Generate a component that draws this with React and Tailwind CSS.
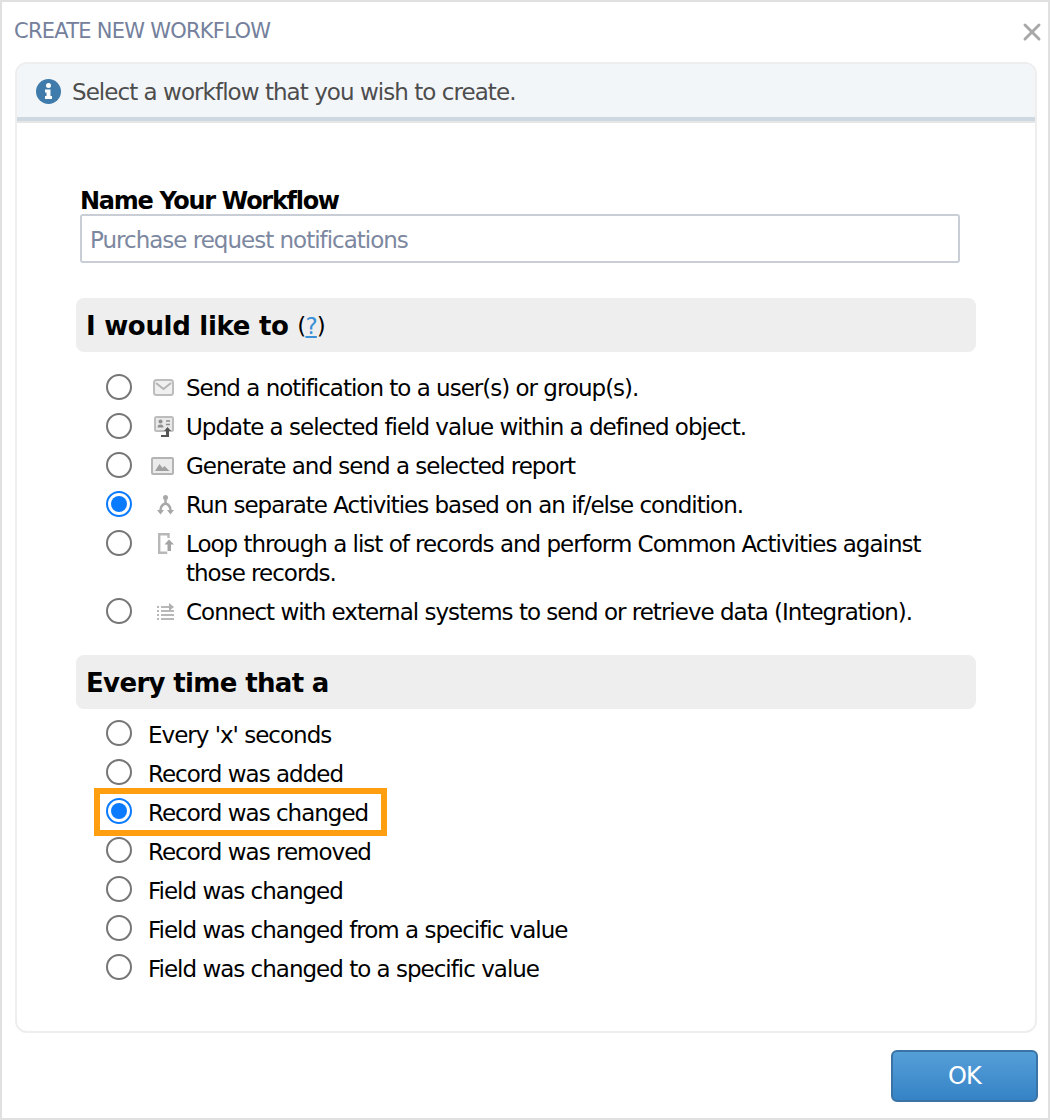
import { X } from 'lucide-react';

const font = { fontFamily: '"DejaVu Sans", sans-serif' };

const Radio = ({ checked = false }) => (
  <span className={`w-[26px] h-[26px] shrink-0 rounded-full flex items-center justify-center bg-white border-2 ${checked ? 'border-[#0a7aff]' : 'border-[#767676]'}`}>
    {checked && <span className="w-4 h-4 rounded-full bg-[#0a7aff]" />}
  </span>
);

const MailIcon = () => (
  <svg width="21" height="17" viewBox="0 0 21 17" fill="none">
    <rect x="1" y="1" width="19" height="15" rx="2.500" fill="#f0f0f0" stroke="#bdbdbd" strokeWidth="2" />
    <path d="M3 4l7.500 6L18 4" stroke="#b4b4b4" strokeWidth="2" />
  </svg>
);

const UpdateIcon = () => (
  <svg width="20" height="21" viewBox="0 0 20 21" fill="none">
    <rect x="0" y="0" width="20" height="16" rx="2.500" fill="#bdbdbd" />
    <rect x="2" y="2" width="16" height="12" fill="#e8e8e8" />
    <circle cx="6.500" cy="5.500" r="2" fill="#8f8f8f" />
    <path d="M3.500 11.500c0-2 1-3 3-3s3 1 3 3z" fill="#8f8f8f" />
    <path d="M12 5h4M12 8.500h4" stroke="#8f8f8f" strokeWidth="1.600" />
    <path d="M7 19h5v-4h-2l3.500-4 3.500 4h-2v6H7z" fill="#555" />
  </svg>
);

const ReportIcon = () => (
  <svg width="23" height="18" viewBox="0 0 23 18" fill="none">
    <rect x="1" y="1" width="21" height="16" rx="1" fill="#ebebeb" stroke="#b4b4b4" strokeWidth="2" />
    <path d="M4 14l4.500-7 3 4 2-2 5 5z" fill="#a0a0a0" />
  </svg>
);

const BranchIcon = () => (
  <svg width="17" height="20" viewBox="0 0 17 20" fill="none">
    <circle cx="8.500" cy="2.500" r="2.500" fill="#a8a8a8" />
    <path d="M8.500 4v5M8.500 8.500c-3.500 1-5 3.500-5 7M8.500 8.500c3.500 1 5 3.500 5 7" stroke="#a8a8a8" strokeWidth="2.400" />
    <path d="M0 15h7l-3.500 4.500zM10 15h7l-3.500 4.500z" fill="#a8a8a8" />
  </svg>
);

const LoopIcon = () => (
  <svg width="16" height="21" viewBox="0 0 16 21" fill="none">
    <path d="M10.500 5V1.200H1.200v18.600h8" stroke="#b8b8b8" strokeWidth="2.400" />
    <path d="M6.500 11.500 11 6.500l5 5h-3V18h-3.500v-6.500z" fill="#a4a4a4" />
  </svg>
);

const ListIcon = () => (
  <svg width="17" height="18" viewBox="0 0 17 18" fill="none">
    <path d="M0 4h2M0 8h2M0 12h2M0 16h2M4 8h13M4 12h13M4 16h13M4 4h8" stroke="#b8b8b8" strokeWidth="2" />
    <path d="M12 0l5 4-5 4z" fill="#b0b0b0" />
  </svg>
);

const actions = [
  { icon: MailIcon, text: 'Send a notification to a user(s) or group(s).' },
  { icon: UpdateIcon, text: 'Update a selected field value within a defined object.' },
  { icon: ReportIcon, text: 'Generate and send a selected report' },
  { icon: BranchIcon, text: 'Run separate Activities based on an if/else condition.', checked: true },
  { icon: LoopIcon, text: 'Loop through a list of records and perform Common Activities against those records.' },
  { icon: ListIcon, text: 'Connect with external systems to send or retrieve data (Integration).' },
];

const triggers = [
  { text: "Every 'x' seconds" },
  { text: 'Record was added' },
  { text: 'Record was changed', checked: true },
  { text: 'Record was removed' },
  { text: 'Field was changed' },
  { text: 'Field was changed from a specific value' },
  { text: 'Field was changed to a specific value' },
];

const SectionTitle = ({ className, children }) => (
  <div className={`h-[54px] rounded-lg bg-[#eeeeee] pl-[10px] pt-[2px] flex items-center text-[26px] font-bold text-black ${className}`}>
    {children}
  </div>
);

export default function App() {
  return (
    <div style={font} className="w-[1050px] h-[1120px] bg-white border-2 border-[#e0e0e0] flex flex-col text-black">
      <div className="h-[60px] pl-[12px] pr-[2px] pb-[1px] flex items-center justify-between">
        <span className="text-[21px] tracking-[-0.75px] text-[#74809c] leading-none">CREATE NEW WORKFLOW</span>
        <X className="w-[28px] h-[28px] text-[#a9a9a9]" strokeWidth={2.5} />
      </div>

      <div className="ml-[13px] mr-[11px] h-[971px] rounded-xl border-2 border-[#eeeeee] overflow-hidden">
        <div className="h-[53px] pt-[1px] bg-[#f3f6f9] flex items-center pl-[19px]">
          <svg width="25" height="25" viewBox="0 0 25 25">
            <circle cx="12.500" cy="12.500" r="12.500" fill="#3f7cab" />
            <circle cx="12.500" cy="6.500" r="2.500" fill="#fff" />
            <path d="M9 10.500h5.500V17H16v3H9v-3h1.500v-3.500H9z" fill="#fff" />
          </svg>
          <span className="ml-[11px] pt-[3px] text-[23px] tracking-[-0.95px] text-[#4d4d4d]">Select a workflow that you wish to create.</span>
        </div>
        <div className="h-[4px] bg-[#cdd8e0]" />
        <div className="h-[2px] bg-[#e6e6e6]" />

        <div className="pl-[59px] pr-[59px] pt-[65px]">
          <div className="pl-[4px] pr-[16px]">
            <div className="text-[24px] font-bold tracking-[-1.3px] leading-[26px]">Name Your Workflow</div>
            <input
              readOnly
              placeholder="Purchase request notifications"
              className="w-full h-[49px] rounded-[3px] border-2 border-[#c9ced6] px-[8px] pt-[2px] text-[23px] tracking-[-1px] outline-none placeholder:text-[#7c87a0]"
            />
          </div>

          <div className="mt-[35px]">
            <SectionTitle className="tracking-[-0.3px]">
              I would like to&nbsp;
              <span className="font-normal tracking-[-0.85px] text-[23px]">(<span className="text-[#3a8fd6] underline">?</span>)</span>
            </SectionTitle>
          </div>

          <div className="mt-[16px] pl-[30px] flex flex-col">
            {actions.map(({ icon: Icon, text, checked }) => (
              <div key={text} className="flex items-start pt-[5px] pb-[4px] leading-[29px] text-[23px] tracking-[-1px]">
                <div className="mt-[1px]"><Radio checked={checked} /></div>
                <div className="w-[44px] h-[29px] shrink-0 flex items-center justify-end pr-[2px]"><Icon /></div>
                <span className="ml-[10px] w-[750px] pt-[1px]">{text}</span>
              </div>
            ))}
          </div>

          <div className="mt-[24px]">
            <SectionTitle className="tracking-[-0.65px]">Every time that a</SectionTitle>
          </div>

          <div className="mt-[4px] pl-[30px] flex flex-col">
            {triggers.map(({ text, checked }) => (
              <div key={text} className="flex items-center h-[39px] text-[23px] tracking-[-1px]">
                <div className={checked ? 'flex items-center h-[48px] mt-[2px] pb-[2px] -ml-[12px] pl-[6px] pr-[13px] border-[6px] border-[#ff9e0f]' : 'flex items-center'}>
                  <Radio checked={checked} />
                  <span className="ml-[16px] pt-[6px]">{text}</span>
                </div>
              </div>
            ))}
          </div>
        </div>
      </div>

      <div className="mt-[17px] mr-[10px] flex justify-end">
        <button className="w-[147px] h-[52px] rounded-[6px] border-2 border-[#3a73a6] bg-gradient-to-b from-[#559fd8] to-[#3583c6] text-white text-[24px] tracking-[-0.8px]">OK</button>
      </div>
    </div>
  );
}
